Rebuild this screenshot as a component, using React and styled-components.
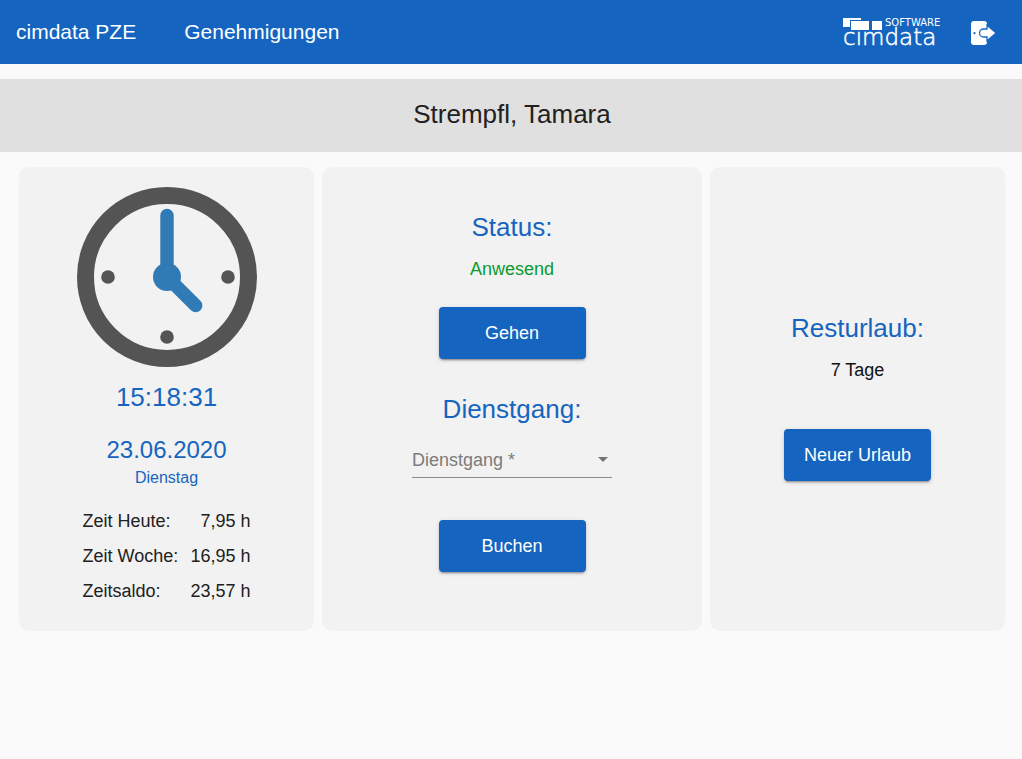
import React, { useState } from "react";
import styled, { createGlobalStyle } from "styled-components";

const Global = createGlobalStyle`
  * { box-sizing: border-box; }
  body {
    margin: 0;
    background: #fafafa;
    color: #212121;
    font-family: "Liberation Sans", Arial, sans-serif;
    font-size: 18px;
  }
`;

const Toolbar = styled.header`
  display: flex;
  align-items: center;
  height: 64px;
  padding: 0 24px 0 16px;
  background: #1565c0;
  color: #fff;
`;

const Nav = styled.nav`
  display: flex;
  flex: 1;
  gap: 48px;
`;

const NavLink = styled.a`
  color: inherit;
  font-size: 21px;
  line-height: 24px;
  text-decoration: none;
`;

const LogoutButton = styled.button`
  display: flex;
  margin-left: 24px;
  padding: 0;
  border: 0;
  background: none;
  color: inherit;
  cursor: pointer;
`;

const TitleBar = styled.h1`
  margin: 15px 0;
  padding: 20px 16px 23px 18px;
  background: #e0e0e0;
  font-size: 26px;
  font-weight: 400;
  line-height: 30px;
  text-align: center;
`;

const Cards = styled.main`
  display: grid;
  grid-template-columns: 295fr 380fr 295fr;
  gap: 8px;
  padding: 0 17px 24px 19px;
`;

const Card = styled.section`
  display: flex;
  flex-direction: column;
  align-items: center;
  justify-content: ${(p) => (p.$centered ? "center" : "flex-start")};
  padding: ${(p) => p.$pad || "20px 16px"};
  border-radius: 10px;
  background: #f2f2f2;
`;

const Heading = styled.h2`
  margin: ${(p) => p.$top || 0}px 0 0;
  color: #1565c0;
  font-size: 26px;
  font-weight: 400;
  line-height: 30px;
`;

const DateText = styled.div`
  margin-top: 24px;
  color: #1565c0;
  font-size: 24px;
  line-height: 28px;
`;

const Weekday = styled.div`
  margin-top: 4px;
  color: #1565c0;
  font-size: 16px;
  line-height: 20px;
`;

const Times = styled.table`
  width: 168px;
  margin-top: 16px;
  border-collapse: collapse;

  th, td {
    height: 35px;
    padding: 0;
    font-weight: 400;
    white-space: nowrap;
  }
  th { text-align: left; }
  td { text-align: right; }
`;

const Info = styled.p`
  margin: 16px 0 0;
  color: ${(p) => (p.$positive ? "#0a9a30" : "#111")};
  line-height: 22px;
`;

const Button = styled.button`
  width: 147px;
  height: 52px;
  margin-top: ${(p) => p.$top}px;
  border: 0;
  border-radius: 4px;
  background: #1565c0;
  box-shadow: 0 3px 1px -2px rgba(0, 0, 0, 0.2), 0 2px 2px 0 rgba(0, 0, 0, 0.14),
    0 1px 5px 0 rgba(0, 0, 0, 0.12);
  color: #fff;
  font: inherit;
  cursor: pointer;
`;

const SelectField = styled.div`
  display: flex;
  align-items: center;
  width: 200px;
  height: 36px;
  margin-top: 18px;
  border-bottom: 1px solid #8a8a8a;
`;

const Select = styled.select`
  flex: 1;
  width: 100%;
  height: 35px;
  margin-right: -14px;
  padding: 0 14px 0 0;
  border: 0;
  outline: 0;
  appearance: none;
  background: none;
  color: #7b7b7b;
  font: inherit;
`;

const Arrow = styled.svg`
  margin-right: 4px;
  pointer-events: none;
`;

const LogoSvg = styled.svg`
  overflow: visible;
  fill: #fff;
  font-family: "DejaVu Sans", sans-serif;
`;

function Logo() {
  return (
    <LogoSvg width="104" height="32" viewBox="0 0 104 32" role="img" aria-label="cimdata Software">
      <rect x="1" y="2" width="18" height="9" />
      <rect x="8.5" y="4.5" width="19" height="10" stroke="#1565c0" />
      <rect x="29.5" y="4.5" width="11" height="10" stroke="#1565c0" />
      <text x="43" y="10" fontSize="10">SOFTWARE</text>
      <text x="1" y="29" fontSize="23" fontWeight="200" stroke="#fff" strokeWidth="0.5">cimdata</text>
    </LogoSvg>
  );
}

function Clock() {
  return (
    <svg width="180" height="180" viewBox="0 0 180 180" aria-hidden="true">
      <circle cx="90" cy="90" r="81.5" fill="none" stroke="#545454" strokeWidth="17" />
      <g fill="#545454">
        <circle cx="31" cy="90" r="6.8" />
        <circle cx="151" cy="90" r="6.8" />
        <circle cx="90" cy="150" r="6.8" />
      </g>
      <g stroke="#307ab5" strokeWidth="13.4" strokeLinecap="round">
        <path d="M90 90V28.5M90 90l28.7 28.5" />
      </g>
      <circle cx="90" cy="90" r="14" fill="#307ab5" />
    </svg>
  );
}

function LogoutIcon() {
  return (
    <svg width="28" height="28" viewBox="0 0 28 28" aria-hidden="true">
      <path d="M4 3h10a3 3 0 0 1 3 3v18a3 3 0 0 1-3 3H4a3 3 0 0 1-3-3V6a3 3 0 0 1 3-3z" fill="#fff" />
      <path d="M13.5 11H17V7.2l9.2 7.8-9.2 7.8V19h-3.5a4 4 0 0 1 0-8z" fill="#fff" stroke="#1565c0" strokeWidth="1.3" />
      <circle cx="4.5" cy="15.2" r="1.1" fill="#1565c0" />
    </svg>
  );
}

const times = [
  ["Zeit Heute:", "7,95 h"],
  ["Zeit Woche:", "16,95 h"],
  ["Zeitsaldo:", "23,57 h"],
];

export default function App() {
  const [trip, setTrip] = useState("");
  return (
    <>
      <Global />
      <Toolbar>
        <Nav>
          <NavLink href="#home">cimdata PZE</NavLink>
          <NavLink href="#genehmigungen">Genehmigungen</NavLink>
        </Nav>
        <Logo />
        <LogoutButton aria-label="Abmelden"><LogoutIcon /></LogoutButton>
      </Toolbar>
      <TitleBar>Strempfl, Tamara</TitleBar>
      <Cards>
        <Card $pad="20px 16px 22px">
          <Clock />
          <Heading $top={15}>15:18:31</Heading>
          <DateText>23.06.2020</DateText>
          <Weekday>Dienstag</Weekday>
          <Times>
            <tbody>
              {times.map(([label, value]) => (
                <tr key={label}>
                  <th scope="row">{label}</th>
                  <td>{value}</td>
                </tr>
              ))}
            </tbody>
          </Times>
        </Card>
        <Card $pad="45px 16px 20px">
          <Heading>Status:</Heading>
          <Info $positive>Anwesend</Info>
          <Button $top={27}>Gehen</Button>
          <Heading $top={35} id="trip-heading">Dienstgang:</Heading>
          <SelectField>
            <Select aria-labelledby="trip-heading" required value={trip} onChange={(e) => setTrip(e.target.value)}>
              <option value="">Dienstgang *</option>
            </Select>
            <Arrow width="10" height="5" viewBox="0 0 10 5" aria-hidden="true">
              <path d="M0 0h10L5 5z" fill="#757575" />
            </Arrow>
          </SelectField>
          <Button $top={42}>Buchen</Button>
        </Card>
        <Card $centered $pad="16px 16px 20px">
          <Heading>Resturlaub:</Heading>
          <Info>7 Tage</Info>
          <Button $top={48}>Neuer Urlaub</Button>
        </Card>
      </Cards>
    </>
  );
}
